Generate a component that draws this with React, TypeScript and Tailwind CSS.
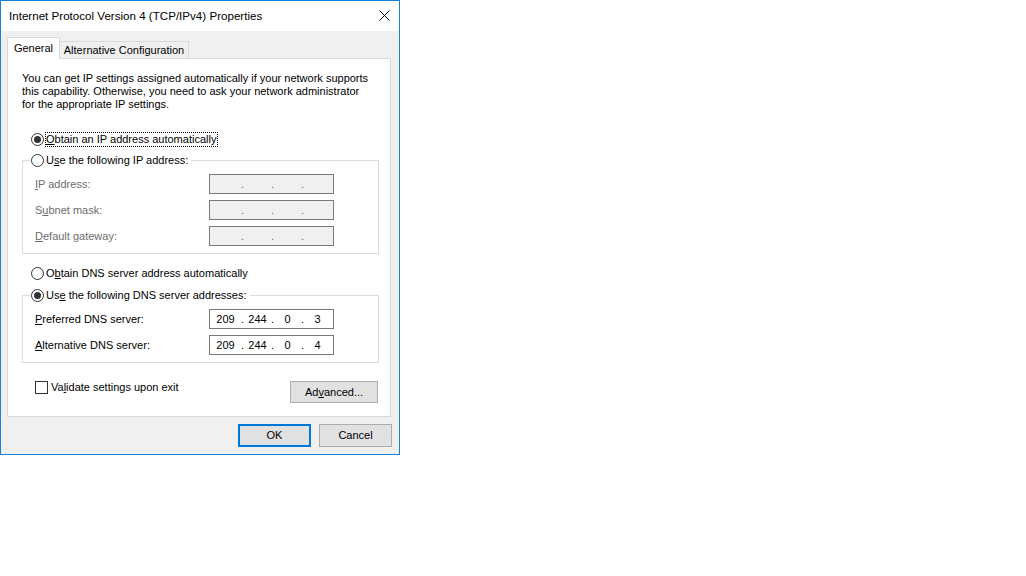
import { Fragment, type ReactNode } from "react";

function Radio({ checked = false }: { checked?: boolean }) {
  return (
    <span className="flex h-[13px] w-[13px] shrink-0 items-center justify-center rounded-full border border-[#333333] bg-white">
      {checked && <span className="h-[7px] w-[7px] rounded-full bg-[#333333]" />}
    </span>
  );
}

function IpBox({ parts, disabled = false }: { parts?: string[]; disabled?: boolean }) {
  const widths = ["w-[31px]", "w-[27px]", "w-[27px]", "w-[27px]"];
  return (
    <div
      className={`flex h-[20px] w-[125px] items-center border border-[#7a7a7a] leading-[13px] ${
        disabled ? "bg-[#f0f0f0] text-[#6d6d6d]" : "bg-white text-black"
      }`}
    >
      {widths.map((w, i) => (
        <Fragment key={i}>
          {i > 0 && <span className="w-[3px] text-center">.</span>}
          <span className={`${w} text-center`}>{parts ? parts[i] : ""}</span>
        </Fragment>
      ))}
    </div>
  );
}

function FieldRow({
  label,
  parts,
  disabled = false,
}: {
  label: ReactNode;
  parts?: string[];
  disabled?: boolean;
}) {
  return (
    <div className="flex h-[20px] items-center">
      <span className={`w-[174px] ${disabled ? "text-[#6d6d6d]" : "text-black"}`}>{label}</span>
      <IpBox parts={parts} disabled={disabled} />
    </div>
  );
}

function Button({ children, primary = false, className = "" }: { children: ReactNode; primary?: boolean; className?: string }) {
  return (
    <button
      className={`flex items-center justify-center bg-[#e1e1e1] ${
        primary ? "border-2 border-[#0078d7]" : "border border-[#adadad]"
      } ${className}`}
    >
      {children}
    </button>
  );
}

export default function App() {
  return (
    <div className="h-[576px] w-[1026px] bg-white font-['Liberation_Sans',Arial,sans-serif] text-[11px] leading-[13px] text-black">
      <div className="flex h-[455px] w-[400px] flex-col border border-[#1883d7]">
        {/* title bar */}
        <div className="flex h-[30px] shrink-0 items-center justify-between bg-white pb-[1px] pl-[8px] pr-[9px] text-[11.6px]">
          <span>Internet Protocol Version 4 (TCP/IPv4) Properties</span>
          <svg width="11" height="11" viewBox="0 0 11 11">
            <path d="M0.5 0.5 L10.5 10.5 M10.5 0.5 L0.5 10.5" stroke="#000" strokeWidth="1" fill="none" />
          </svg>
        </div>

        <div className="flex flex-1 flex-col bg-[#f0f0f0] pl-[6px] pr-[8px] pt-[6px]">
          {/* tabs */}
          <div className="flex h-[21px] items-end">
            <div className="relative z-10 -mb-px flex h-[22px] w-[53px] items-center justify-center border-l border-r border-t border-[#d9d9d9] bg-white">
              General
            </div>
            <div className="flex h-[17px] w-[129px] items-center justify-center border-r border-t border-[#d9d9d9] bg-[#f0f0f0]">
              Alternative Configuration
            </div>
          </div>

          {/* panel */}
          <div className="flex h-[359px] w-[384px] flex-col border border-[#d9d9d9] bg-white pl-[14px] pr-[11px] pt-[13px]">
            <p className="whitespace-nowrap leading-[13px]">
              You can get IP settings assigned automatically if your network supports
              <br />
              this capability. Otherwise, you need to ask your network administrator
              <br />
              for the appropriate IP settings.
            </p>

            <div className="ml-[9px] mt-[21px] flex h-[15px] items-center gap-[1px]">
              <Radio checked />
              <span className="flex h-[15px] items-center border border-dotted border-black pr-[1px]">
                <u>O</u>btain an IP address automatically
              </span>
            </div>

            <fieldset className="mt-[7px] border border-[#dcdcdc]">
              <legend className="ml-[8px] pr-[3px]">
                <span className="flex h-[13px] items-center gap-[2px]">
                  <Radio />
                  <span>
                    U<u>s</u>e the following IP address:
                  </span>
                </span>
              </legend>
              <div className="flex flex-col gap-[6px] pb-[7px] pl-[12px] pt-[7px]">
                <FieldRow disabled label={<><u>I</u>P address:</>} />
                <FieldRow disabled label={<>S<u>u</u>bnet mask:</>} />
                <FieldRow disabled label={<><u>D</u>efault gateway:</>} />
              </div>
            </fieldset>

            <div className="ml-[9px] mt-[13px] flex h-[13px] items-center gap-[2px]">
              <Radio />
              <span>
                O<u>b</u>tain DNS server address automatically
              </span>
            </div>

            <fieldset className="mt-[9px] border border-[#dcdcdc]">
              <legend className="ml-[8px] pr-[3px]">
                <span className="flex h-[13px] items-center gap-[2px]">
                  <Radio checked />
                  <span>
                    Us<u>e</u> the following DNS server addresses:
                  </span>
                </span>
              </legend>
              <div className="flex flex-col gap-[6px] pb-[7px] pl-[12px] pt-[7px]">
                <FieldRow label={<><u>P</u>referred DNS server:</>} parts={["209", "244", "0", "3"]} />
                <FieldRow label={<><u>A</u>lternative DNS server:</>} parts={["209", "244", "0", "4"]} />
              </div>
            </fieldset>

            <div className="mt-[17px] flex items-start">
              <div className="ml-[13px] flex h-[14px] items-center gap-[3px]">
                <span className="h-[13px] w-[13px] border border-[#333333] bg-white" />
                <span>
                  Va<u>l</u>idate settings upon exit
                </span>
              </div>
              <Button className="ml-auto mr-[1px] mt-[1px] h-[22px] w-[88px]">
                Ad<u>v</u>anced...
              </Button>
            </div>
          </div>

          {/* footer */}
          <div className="-mr-px flex justify-end gap-[8px] pt-[7px]">
            <Button primary className="h-[23px] w-[73px]">
              OK
            </Button>
            <Button className="h-[23px] w-[73px]">Cancel</Button>
          </div>
        </div>
      </div>
    </div>
  );
}
